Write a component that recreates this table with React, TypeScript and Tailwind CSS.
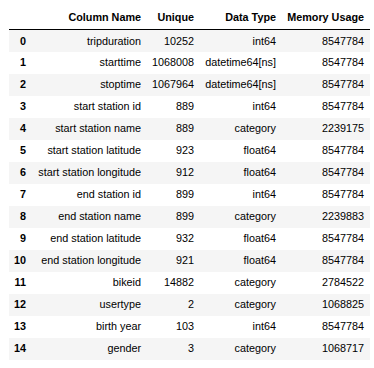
const rows: [string, string, string, string][] = [
  ["tripduration", "10252", "int64", "8547784"],
  ["starttime", "1068008", "datetime64[ns]", "8547784"],
  ["stoptime", "1067964", "datetime64[ns]", "8547784"],
  ["start station id", "889", "int64", "8547784"],
  ["start station name", "889", "category", "2239175"],
  ["start station latitude", "923", "float64", "8547784"],
  ["start station longitude", "912", "float64", "8547784"],
  ["end station id", "899", "int64", "8547784"],
  ["end station name", "899", "category", "2239883"],
  ["end station latitude", "932", "float64", "8547784"],
  ["end station longitude", "921", "float64", "8547784"],
  ["bikeid", "14882", "category", "2784522"],
  ["usertype", "2", "category", "1068825"],
  ["birth year", "103", "int64", "8547784"],
  ["gender", "3", "category", "1068717"],
];

export default function App() {
  return (
    <div className="h-[368px] w-[374px] bg-white pl-[9px] font-['Liberation_Sans',Arial,sans-serif] text-[10.8px] text-black">
      <table className="table-fixed border-collapse">
        <colgroup>
          <col className="w-[23px]" />
          <col className="w-[115px]" />
          <col className="w-[53px]" />
          <col className="w-[82px]" />
          <col className="w-[88px]" />
        </colgroup>
        <thead>
          <tr className="h-[29px] border-b border-black font-bold">
            <th />
            {["Column Name", "Unique", "Data Type", "Memory Usage"].map((h) => (
              <th key={h} className="pr-[6px] pt-[10px] pb-[4px] text-right align-bottom leading-[15px] whitespace-nowrap">
                {h}
              </th>
            ))}
          </tr>
        </thead>
        <tbody>
          {rows.map((r, i) => (
            <tr key={i} className={i % 2 === 0 ? "h-[22px] bg-[#f5f5f5]" : "h-[22px]"}>
              <th className="pr-[6px] text-right font-bold">{i}</th>
              {r.map((c, j) => (
                <td key={j} className="pr-[6px] text-right whitespace-nowrap">
                  {c}
                </td>
              ))}
            </tr>
          ))}
        </tbody>
      </table>
    </div>
  );
}
